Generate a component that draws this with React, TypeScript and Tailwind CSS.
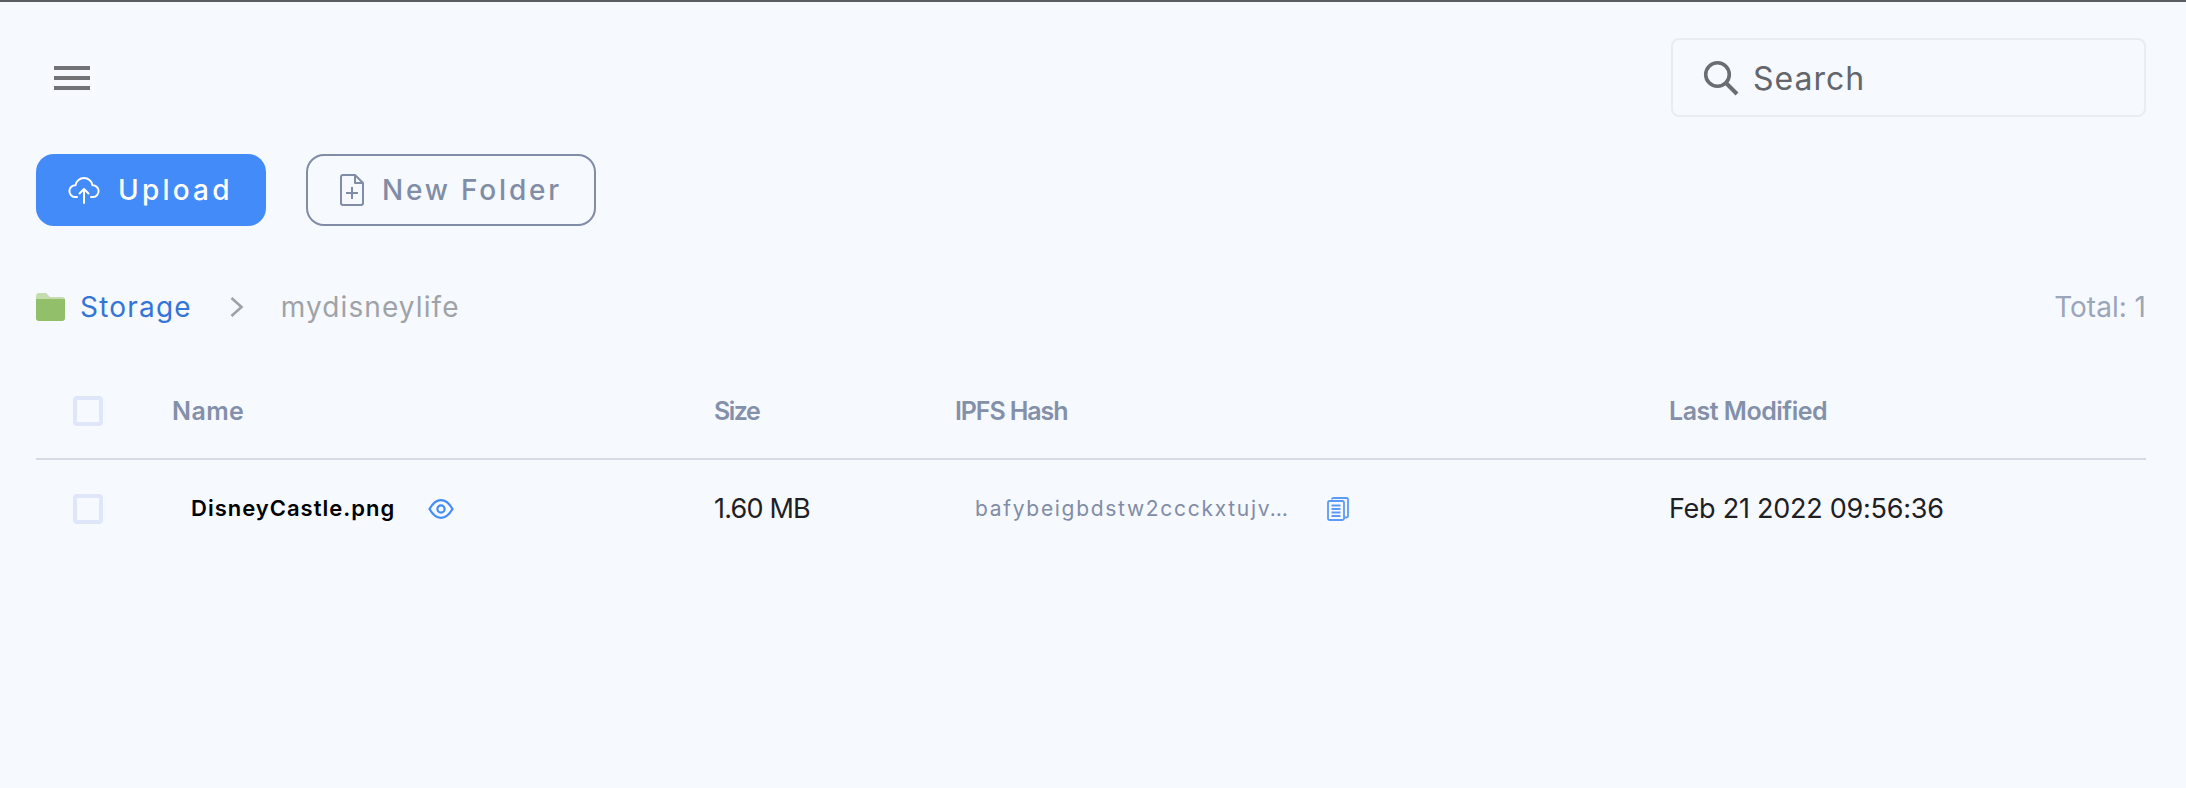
import React from "react";

function Check() {
  return <div className="w-[30px] h-[30px] rounded-[4px] border-[4px] border-[#dfe6fa] shrink-0" />;
}

export default function App() {
  return (
    <div className="w-[2186px] h-[788px] overflow-hidden bg-[#f6f9fe] border-t-2 border-[#5a5d62] font-['Inter',sans-serif] pl-[36px] pr-[40px]">
      <div className="flex items-center justify-between h-[79px] mt-[36px]">
        <div className="ml-[18px] w-[36px] h-[24px] flex flex-col justify-between">
          <div className="h-[4px] bg-[#707276]" />
          <div className="h-[4px] bg-[#707276]" />
          <div className="h-[4px] bg-[#707276]" />
        </div>
        <div className="w-[475px] h-[79px] rounded-[8px] border-2 border-[#e8edf2] flex items-center pl-[30px] gap-[14px]">
          <svg width="36" height="36" viewBox="0 0 36 36" fill="none" stroke="#6a6d71" strokeWidth="3.6">
            <circle cx="14.5" cy="14.5" r="11.8" />
            <path d="M23 23 L34 34" strokeWidth="4" />
          </svg>
          <span className="text-[32px] leading-none tracking-[1px] text-[#63666b] pt-[3px]">Search</span>
        </div>
      </div>

      <div className="flex gap-[40px] h-[72px] mt-[37px]">
        <div className="w-[230px] rounded-[18px] bg-[#438bf8] flex items-center pl-[32px] gap-[18px] text-white">
          <svg width="32" height="28" viewBox="0 0 32 28" fill="none" stroke="#fff" strokeWidth="2" strokeLinecap="round" strokeLinejoin="round">
            <path d="M9 21 H7 A5.9 5.9 0 0 1 7.6 9.2 A8.5 8.5 0 0 1 24.4 9.2 A5.9 5.9 0 0 1 25 21 H23" />
            <path d="M16 27 V13 M11.5 17.5 L16 13 L20.5 17.5" />
          </svg>
          <span className="text-[28px] leading-none tracking-[3.2px] font-medium">Upload</span>
        </div>
        <div className="w-[290px] rounded-[18px] border-2 border-[#818ca6] flex items-center pl-[32px] gap-[18px] text-[#818ca6]">
          <svg width="24" height="32" viewBox="0 0 24 32" fill="none" stroke="#818ca6" strokeWidth="2" strokeLinejoin="round">
            <path d="M3 1 H15 L23 9 V29 C23 30 22 31 21 31 H3 C2 31 1 30 1 29 V3 C1 2 2 1 3 1 Z" />
            <path d="M15 1 V9 H23" />
            <path d="M6 19 H18 M12 13 V25" />
          </svg>
          <span className="text-[28px] leading-none tracking-[2.8px] font-medium">New Folder</span>
        </div>
      </div>

      <div className="flex items-center justify-between h-[30px] mt-[66px]">
        <div className="flex items-center">
          <svg width="29" height="28" viewBox="0 0 29 28" className="mr-[15px]">
            <path d="M0 3 C0 1 1 0 3 0 H10 L14 4 H26 C28 4 29 5 29 7 V9 H0 Z" fill="#c5dcb0" />
            <path d="M0 6 H29 V25 C29 27 28 28 26 28 H3 C1 28 0 27 0 25 Z" fill="#92bf69" />
          </svg>
          <span className="text-[28px] leading-none tracking-[1.2px] text-[#3575d5]">Storage</span>
          <svg width="14" height="20" viewBox="0 0 14 20" fill="none" stroke="#9ea1a5" strokeWidth="2.6" className="ml-[38px] mr-[37px]">
            <path d="M1.5 1 L11.5 10 L1.5 19" />
          </svg>
          <span className="text-[28px] leading-none tracking-[1.1px] text-[#9fa3a8]">mydisneylife</span>
        </div>
        <span className="text-[28px] leading-none text-[#9ba6b8]">Total: 1</span>
      </div>

      <div className="flex items-center h-[96px] mt-[42px] border-b-2 border-[#d5dbe4] text-[25px] font-semibold leading-none text-[#8490a9]">
        <div className="w-[136px] pl-[37px]"><Check /></div>
        <div className="w-[542px] tracking-[0.4px]">Name</div>
        <div className="w-[241px] tracking-[-1.5px]">Size</div>
        <div className="w-[714px] tracking-[-1.1px]">IPFS Hash</div>
        <div className="tracking-[-0.5px]">Last Modified</div>
      </div>

      <div className="flex items-center h-[98px]">
        <div className="w-[155px] pl-[37px]"><Check /></div>
        <div className="w-[523px] flex items-center">
          <span className="text-[22px] leading-none font-semibold text-black tracking-[1px] mb-[2px]">DisneyCastle.png</span>
          <svg width="26" height="20" viewBox="0 0 26 20" fill="none" stroke="#438bf8" strokeWidth="2.2" className="ml-[33px]">
            <path d="M1.5 10 C5 4 9 1.2 13 1.2 C17 1.2 21 4 24.5 10 C21 16 17 18.8 13 18.8 C9 18.8 5 16 1.5 10 Z" />
            <circle cx="13" cy="10" r="3.6" />
          </svg>
        </div>
        <div className="w-[261px] text-[27px] leading-none tracking-[-0.8px] text-[#1e2024] mb-[2px]">1.60 MB</div>
        <div className="w-[694px] flex items-center">
          <span className="text-[21px] leading-none text-[#818ca6] tracking-[1.7px] mb-[2px]">bafybeigbdstw2ccckxtujv…</span>
          <svg width="22" height="24" viewBox="0 0 22 24" fill="none" stroke="#5b9af8" strokeWidth="1.8" className="ml-[37px]">
            <path d="M5 2.5 C5 1.5 5.5 1 6.5 1 H19.5 C20.5 1 21 1.5 21 2.5 V19 C21 20 20.5 20.5 19.5 20.5 H17" />
            <rect x="1" y="4" width="16" height="19" rx="1.5" fill="#f6f9fe" />
            <path d="M4.5 8.5 H13.5 M4.5 12 H13.5 M4.5 15.5 H13.5 M4.5 19 H13.5" />
          </svg>
        </div>
        <div className="text-[27px] leading-none tracking-[-0.25px] text-[#1e2024] mb-[2px]">Feb 21 2022 09:56:36</div>
      </div>
    </div>
  );
}
